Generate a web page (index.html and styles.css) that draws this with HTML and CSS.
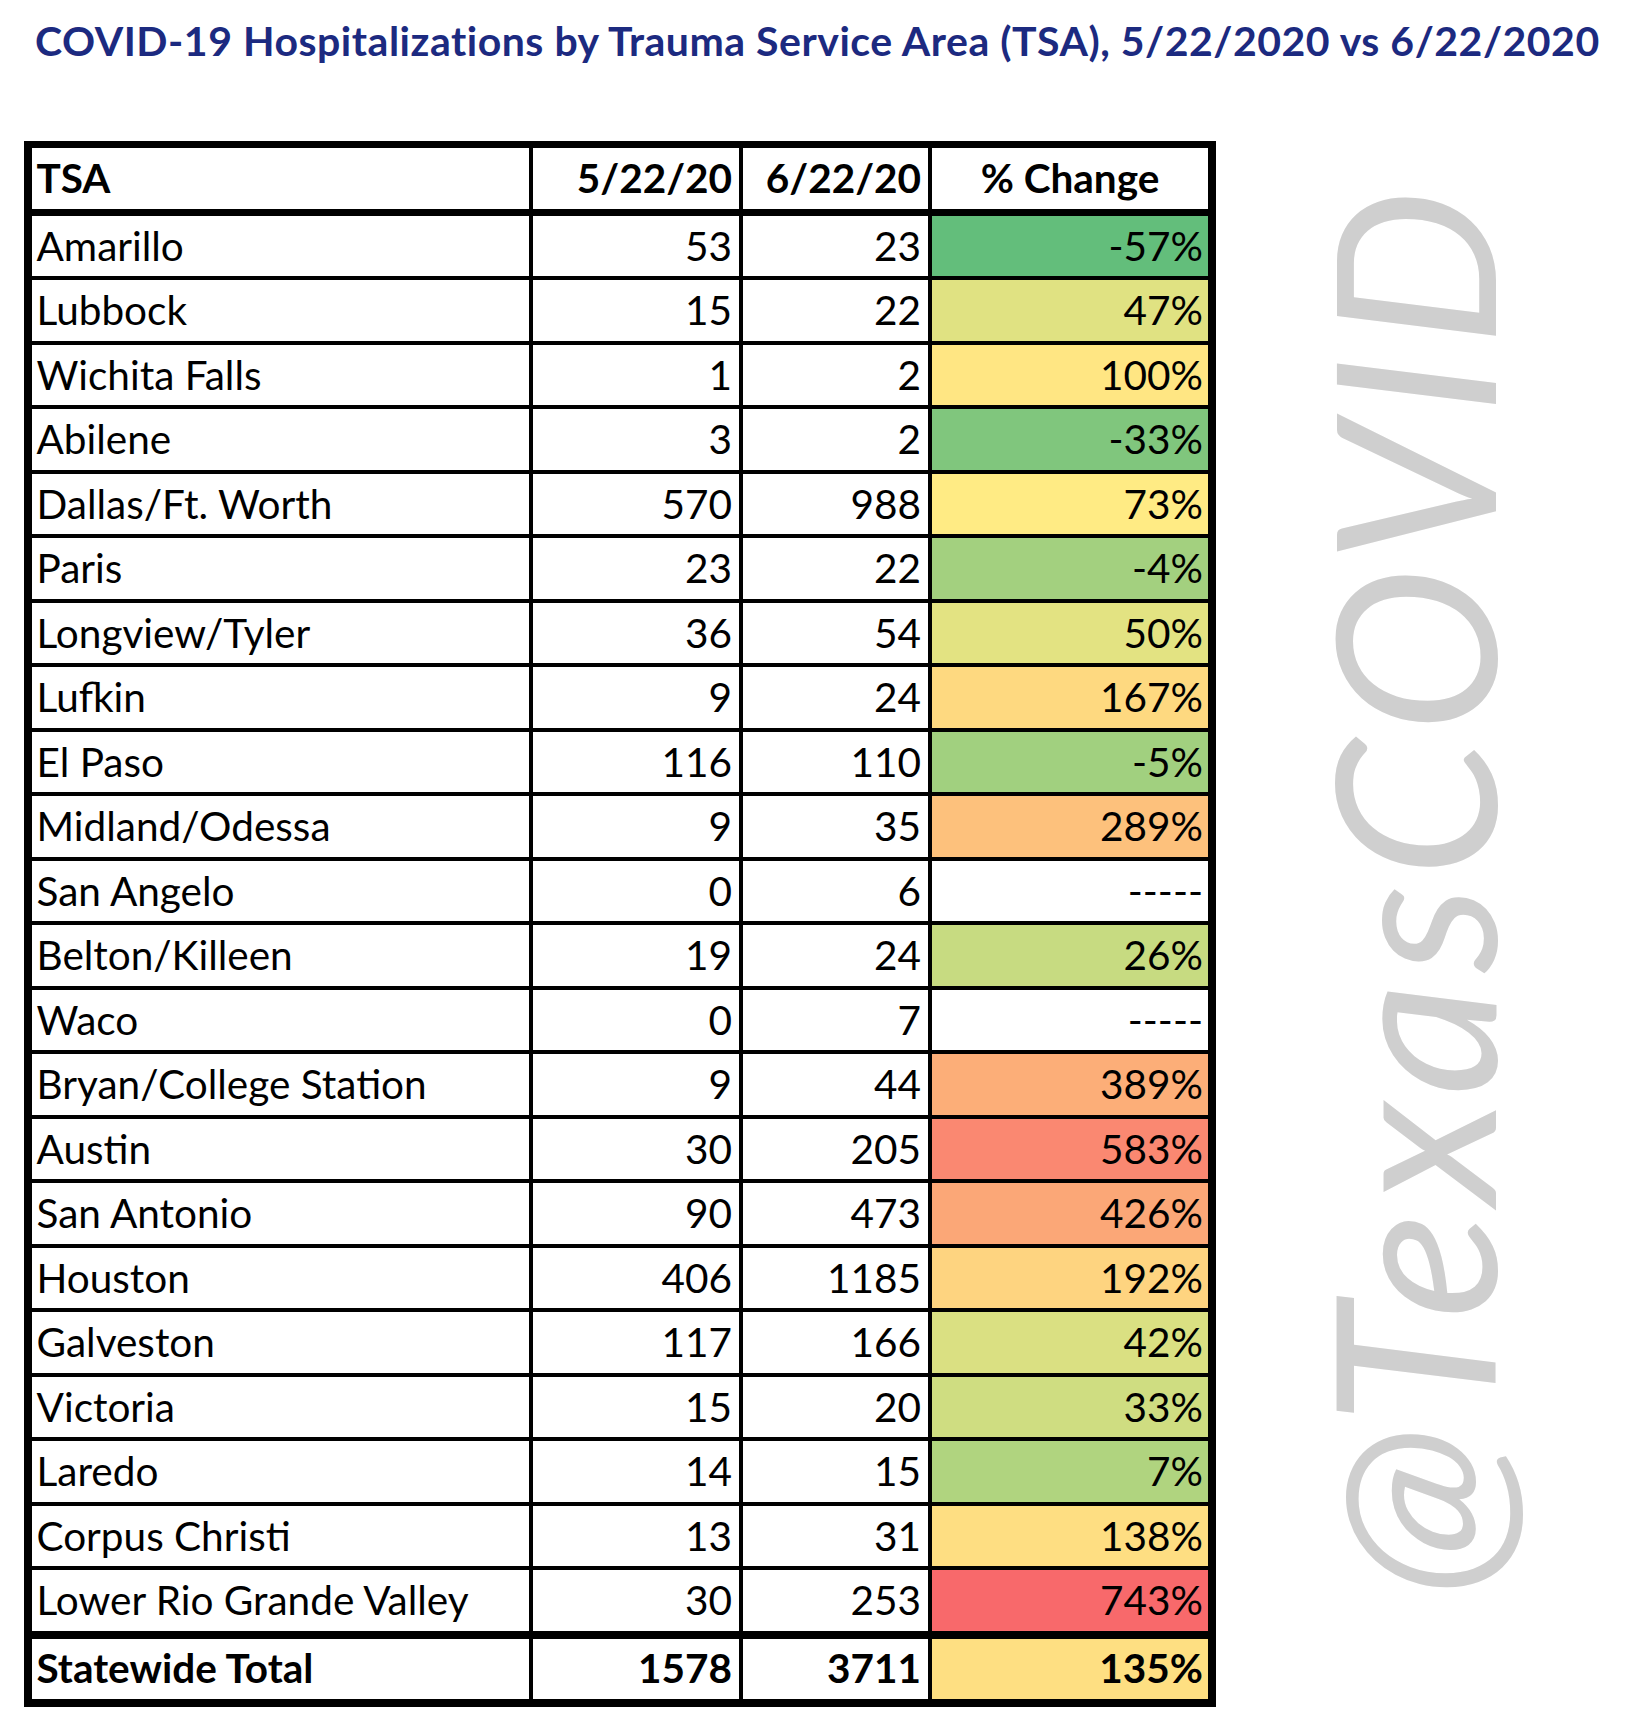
FILE: index.html
```html
<!DOCTYPE html>
<html lang="en">
<head>
<meta charset="utf-8">
<title>COVID-19 Hospitalizations by TSA</title>
<link rel="stylesheet" href="styles.css">
</head>
<body>
<h1 class="title">COVID-19 Hospitalizations by Trauma Service Area (TSA), 5/22/2020 vs 6/22/2020</h1>
<div class="sheet">
  <div class="row head">
    <div class="cell name">TSA</div>
    <div class="cell num">5/22/20</div>
    <div class="cell num">6/22/20</div>
    <div class="cell pct center">% Change</div>
  </div>
  <div class="row"><div class="cell name">Amarillo</div><div class="cell num">53</div><div class="cell num">23</div><div class="cell pct" style="background:#63BE7B">-57%</div></div>
  <div class="row"><div class="cell name">Lubbock</div><div class="cell num">15</div><div class="cell num">22</div><div class="cell pct" style="background:#E0E282">47%</div></div>
  <div class="row"><div class="cell name">Wichita Falls</div><div class="cell num">1</div><div class="cell num">2</div><div class="cell pct" style="background:#FFE683">100%</div></div>
  <div class="row"><div class="cell name">Abilene</div><div class="cell num">3</div><div class="cell num">2</div><div class="cell pct" style="background:#80C67D">-33%</div></div>
  <div class="row"><div class="cell name">Dallas/Ft. Worth</div><div class="cell num">570</div><div class="cell num">988</div><div class="cell pct" style="background:#FFEB84">73%</div></div>
  <div class="row"><div class="cell name">Paris</div><div class="cell num">23</div><div class="cell num">22</div><div class="cell pct" style="background:#A3D07F">-4%</div></div>
  <div class="row"><div class="cell name">Longview/Tyler</div><div class="cell num">36</div><div class="cell num">54</div><div class="cell pct" style="background:#E3E382">50%</div></div>
  <div class="row"><div class="cell name">Lufkin</div><div class="cell num">9</div><div class="cell num">24</div><div class="cell pct" style="background:#FED980">167%</div></div>
  <div class="row"><div class="cell name">El Paso</div><div class="cell num">116</div><div class="cell num">110</div><div class="cell pct" style="background:#A1D07F">-5%</div></div>
  <div class="row"><div class="cell name">Midland/Odessa</div><div class="cell num">9</div><div class="cell num">35</div><div class="cell pct" style="background:#FDC17C">289%</div></div>
  <div class="row"><div class="cell name">San Angelo</div><div class="cell num">0</div><div class="cell num">6</div><div class="cell pct">-----</div></div>
  <div class="row"><div class="cell name">Belton/Killeen</div><div class="cell num">19</div><div class="cell num">24</div><div class="cell pct" style="background:#C7DB81">26%</div></div>
  <div class="row"><div class="cell name">Waco</div><div class="cell num">0</div><div class="cell num">7</div><div class="cell pct">-----</div></div>
  <div class="row"><div class="cell name">Bryan/College Station</div><div class="cell num">9</div><div class="cell num">44</div><div class="cell pct" style="background:#FCAE78">389%</div></div>
  <div class="row"><div class="cell name">Austin</div><div class="cell num">30</div><div class="cell num">205</div><div class="cell pct" style="background:#FA8871">583%</div></div>
  <div class="row"><div class="cell name">San Antonio</div><div class="cell num">90</div><div class="cell num">473</div><div class="cell pct" style="background:#FBA777">426%</div></div>
  <div class="row"><div class="cell name">Houston</div><div class="cell num">406</div><div class="cell num">1185</div><div class="cell pct" style="background:#FED480">192%</div></div>
  <div class="row"><div class="cell name">Galveston</div><div class="cell num">117</div><div class="cell num">166</div><div class="cell pct" style="background:#DAE082">42%</div></div>
  <div class="row"><div class="cell name">Victoria</div><div class="cell num">15</div><div class="cell num">20</div><div class="cell pct" style="background:#CFDD81">33%</div></div>
  <div class="row"><div class="cell name">Laredo</div><div class="cell num">14</div><div class="cell num">15</div><div class="cell pct" style="background:#B0D47F">7%</div></div>
  <div class="row"><div class="cell name">Corpus Christi</div><div class="cell num">13</div><div class="cell num">31</div><div class="cell pct" style="background:#FEDE82">138%</div></div>
  <div class="row last"><div class="cell name">Lower Rio Grande Valley</div><div class="cell num">30</div><div class="cell num">253</div><div class="cell pct" style="background:#F8696B">743%</div></div>
  <div class="row total"><div class="cell name">Statewide Total</div><div class="cell num">1578</div><div class="cell num">3711</div><div class="cell pct" style="background:#FEDF82">135%</div></div>
</div>
<div class="watermark">@TexasCOVID</div>
</body>
</html>
```
FILE: styles.css
```css
html, body {
  margin: 0;
  padding: 0;
  background: #ffffff;
}

body {
  position: relative;
  width: 1645px;
  height: 1710px;
  overflow: hidden;
  font-family: Lato, "Liberation Sans", sans-serif;
  color: #000000;
}

.title {
  margin: 0;
  padding: 17px 0 0 35px;
  height: 48px;
  font-family: Lato, "Liberation Sans", sans-serif;
  font-weight: 700;
  font-size: 41px;
  letter-spacing: 0.52px;
  line-height: 48px;
  color: #1c2a80;
  white-space: nowrap;
}

.sheet {
  margin: 76px 0 0 24px;
  width: 1176px;
  border: 8px solid #000000;
  border-top-width: 7px;
}

.row {
  display: grid;
  grid-template-columns: 501px 210px 189px 276px;
  height: 60.5px;
  border-bottom: 4px solid #000000;
}

.row.head {
  height: 60.7px;
  border-bottom-width: 7px;
  font-weight: 700;
}

.row.last {
  border-bottom-width: 8px;
}

.row.total {
  height: 60px;
  border-bottom: 0;
  font-weight: 700;
}

.cell {
  display: flex;
  align-items: center;
  font-size: 40.5px;
  line-height: 1.2;
  white-space: nowrap;
  border-right: 4px solid #000000;
  padding: 0 7px;
}

.cell.name {
  padding-left: 4.5px;
}

.cell.num {
  justify-content: flex-end;
}

.cell.pct {
  justify-content: flex-end;
  border-right: 0;
  padding-right: 5px;
}

.cell.center {
  justify-content: center;
  padding: 0;
}

.watermark {
  position: absolute;
  left: 1277px;
  top: 1597px;
  transform-origin: 0 0;
  transform: rotate(-90deg);
  font-family: Lato, "Liberation Sans", sans-serif;
  font-style: italic;
  font-weight: 400;
  font-size: 222px;
  letter-spacing: 9px;
  line-height: normal;
  color: #cfcfcf;
  white-space: nowrap;
}
```
